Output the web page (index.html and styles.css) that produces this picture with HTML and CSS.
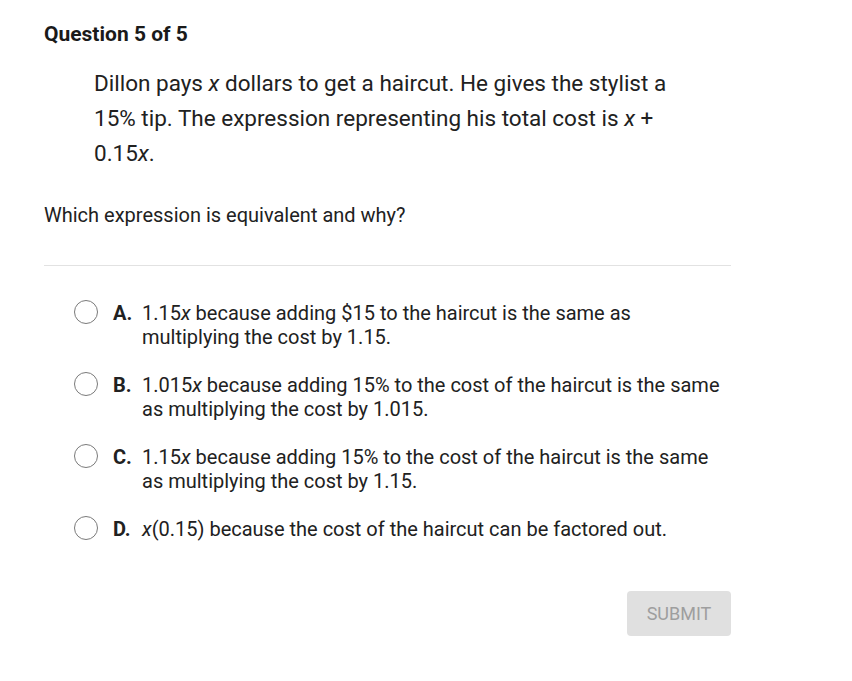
FILE: index.html
```html
<!DOCTYPE html>
<html>
<head>
<meta charset="utf-8">
<link rel="stylesheet" href="styles.css">
</head>
<body>
<div class="page">
  <h1 class="title">Question 5 of 5</h1>
  <p class="passage">Dillon pays <i>x</i> dollars to get a haircut. He gives the stylist a 15% tip. The expression representing his total cost is <i>x</i> + 0.15<i>x</i>.</p>
  <p class="prompt">Which expression is equivalent and why?</p>
  <hr class="sep">
  <div class="options">
    <div class="option"><span class="radio"></span><span class="letter">A.</span><span class="text">1.15<i>x</i> because adding $15 to the haircut is the same as multiplying the cost by 1.15.</span></div>
    <div class="option"><span class="radio"></span><span class="letter">B.</span><span class="text">1.015<i>x</i> because adding 15% to the cost of the haircut is the same as multiplying the cost by 1.015.</span></div>
    <div class="option"><span class="radio"></span><span class="letter">C.</span><span class="text">1.15<i>x</i> because adding 15% to the cost of the haircut is the same as multiplying the cost by 1.15.</span></div>
    <div class="option"><span class="radio"></span><span class="letter">D.</span><span class="text"><i>x</i>(0.15) because the cost of the haircut can be factored out.</span></div>
  </div>
  <div class="actions"><button class="submit">SUBMIT</button></div>
</div>
</body>
</html>
```
FILE: styles.css
```css
html, body {
  margin: 0;
  padding: 0;
  background: #fff;
}
body {
  font-family: Roboto, "Liberation Sans", sans-serif;
  color: #212121;
}
.page {
  width: 687px;
  padding: 20px 0 0 44px;
}
.title {
  margin: 0;
  font-size: 21px;
  font-weight: 700;
  line-height: 28px;
  color: #1a1a1a;
}
.passage {
  margin: 18px 0 0 50px;
  width: 590px;
  font-size: 22.5px;
  line-height: 35px;
  color: #212121;
}
.passage i, .text i {
  font-style: italic;
}
.prompt {
  margin: 31px 0 0 0;
  font-size: 20px;
  line-height: 26px;
  color: #212121;
}
.sep {
  margin: 37px 0 0 0;
  border: 0;
  border-top: 1px solid #e2e2e2;
  height: 0;
}
.options {
  display: flex;
  flex-direction: column;
  gap: 24px;
  margin: 35px 0 0 30px;
}
.option {
  display: flex;
  align-items: flex-start;
  font-size: 20px;
  line-height: 24px;
  width: 652px;
}
.radio {
  flex: none;
  width: 22px;
  height: 22px;
  border: 1.6px solid #7a7a7a;
  border-radius: 50%;
  margin-top: -1px;
  margin-right: 15px;
}
.letter {
  flex: none;
  width: 29px;
  font-weight: 700;
}
.text {
  flex: 1;
}
.actions {
  display: flex;
  justify-content: flex-end;
  margin-top: 50px;
}
.submit {
  width: 104px;
  height: 45px;
  border: 0;
  border-radius: 4px;
  background: #e0e0e0;
  color: #9e9e9e;
  font-family: Roboto, "Liberation Sans", sans-serif;
  font-size: 18px;
  font-weight: 400;
  padding: 0;
}
```
